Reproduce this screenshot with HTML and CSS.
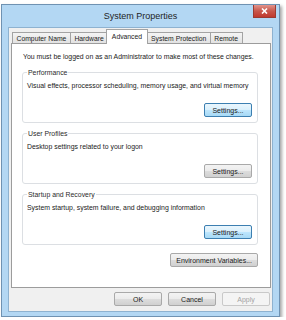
FILE: index.html
```html
<!DOCTYPE html>
<html lang="en">
<head>
<meta charset="UTF-8" />
<meta name="viewport" content="width=device-width, initial-scale=1" />
<title>System Properties</title>
<link rel="stylesheet" href="styles.css">
</head>
<body>

<div class="window">
  <div class="titlebar">
    <span></span>
    <h1>System Properties</h1>
    <button class="close" aria-label="Close">
      <svg width="7" height="6" viewBox="0 0 7 6"><path d="M1 0.5 L6 5.5 M6 0.5 L1 5.5" stroke="#fff" stroke-width="1.6"/></svg>
    </button>
  </div>

  <div class="client">
    <div class="tabs">
      <button class="tab">Computer Name</button>
      <button class="tab">Hardware</button>
      <button class="tab active">Advanced</button>
      <button class="tab">System Protection</button>
      <button class="tab">Remote</button>
    </div>

    <div class="panel">
      <p class="note">You must be logged on as an Administrator to make most of these changes.</p>

      <fieldset class="group">
        <legend>Performance</legend>
        <p>Visual effects, processor scheduling, memory usage, and virtual memory</p>
        <div class="row"><button class="btn default">Settings...</button></div>
      </fieldset>

      <fieldset class="group">
        <legend>User Profiles</legend>
        <p>Desktop settings related to your logon</p>
        <div class="row"><button class="btn">Settings...</button></div>
      </fieldset>

      <fieldset class="group">
        <legend>Startup and Recovery</legend>
        <p>System startup, system failure, and debugging information</p>
        <div class="row"><button class="btn default">Settings...</button></div>
      </fieldset>

      <div class="row env"><button class="btn">Environment Variables...</button></div>
    </div>

    <div class="actions">
      <button class="btn">OK</button>
      <button class="btn">Cancel</button>
      <button class="btn" disabled>Apply</button>
    </div>
  </div>
</div>

</body>
</html>
```

FILE: styles.css
```css
body { margin: 0; background: #fff; font-family: "Liberation Sans", Arial, sans-serif; color: #1a1a1a; }

.window {
  box-sizing: border-box; width: 279px; margin: 4px 0 0 1px;
  border: 1px solid #6f92b2; background: #b3d7f3;
  padding: 0 6px 4px 6px;
  box-shadow: 2px 2px 3px rgba(0,0,0,0.35);
}

.titlebar {
  height: 22px; display: grid; grid-template-columns: 1fr auto 1fr;
}
.titlebar h1 {
  margin: 0; font-size: 9px; font-weight: normal; line-height: 22px; color: #1e1e1e;
}
.close {
  justify-self: end; align-self: start; margin-right: -3px;
  width: 23px; height: 13px; padding: 0; border: 1px solid #9b3a31; border-top: none;
  background: linear-gradient(#e2948c, #c8574b 50%, #c0392e);
  display: flex; align-items: center; justify-content: center;
}

.client {
  box-sizing: border-box; height: 285px;
  border: 1px solid #8eb2d0; background: #f0f0f0;
  padding: 1px 1px 0 2px;
}

.tabs { display: flex; align-items: flex-end; margin: 0 0 -1px 1px; height: 15px; }
.tab {
  font: 6.8px "Liberation Sans", Arial, sans-serif; color: #222;
  height: 11px; padding: 0 3.5px; margin: 0 -1px 1px 0;
  border: 1px solid #a3a3a3; border-bottom: none;
  background: linear-gradient(#f4f4f4, #e2e2e2);
}
.tab.active {
  position: relative; z-index: 1;
  height: 15px; margin: 0 -1px 0 -1px; padding: 0 4.5px 2px;
  background: #fff;
}

.panel {
  box-sizing: border-box; height: 245px;
  border: 1px solid #9c9c9c; background: #fff;
  padding: 8px 12px 0 10px;
  font-size: 6.9px; line-height: 9px;
}
.note { margin: 0 0 0 1px; }

.group {
  margin: 7px 0 0; padding: 0 5px 5px 4px; min-inline-size: 0;
  border: 1px solid #dcdfe3; border-radius: 3px;
}
.group + .group { margin-top: 6px; }
.group legend { padding: 0 1px; color: #2b2b2b; }
.group p { margin: 4px 0 0 0; }
.group .row { margin-top: 13px; }

.row { display: flex; justify-content: flex-end; }
.env { margin-top: 8px; }

.btn {
  box-sizing: border-box; height: 14px; min-width: 48px; padding: 0 5px;
  font: 7px "Liberation Sans", Arial, sans-serif; color: #1a1a1a;
  border: 1px solid #a9a9a9; border-radius: 2px;
  background: linear-gradient(#f3f3f3, #ebebeb 50%, #dddddd 50%, #d0d0d0);
}
.btn.default {
  border-color: #3c7fb1;
  background: linear-gradient(#eaf6fd, #d9f0fc 50%, #bee6fd 50%, #a7d9f5);
}
.btn:disabled { color: #a3a3a3; border-color: #c9c9c9; background: #f4f4f4; }

.actions { display: flex; justify-content: flex-end; gap: 6px; margin: 4px 1px 0 0; }
```
